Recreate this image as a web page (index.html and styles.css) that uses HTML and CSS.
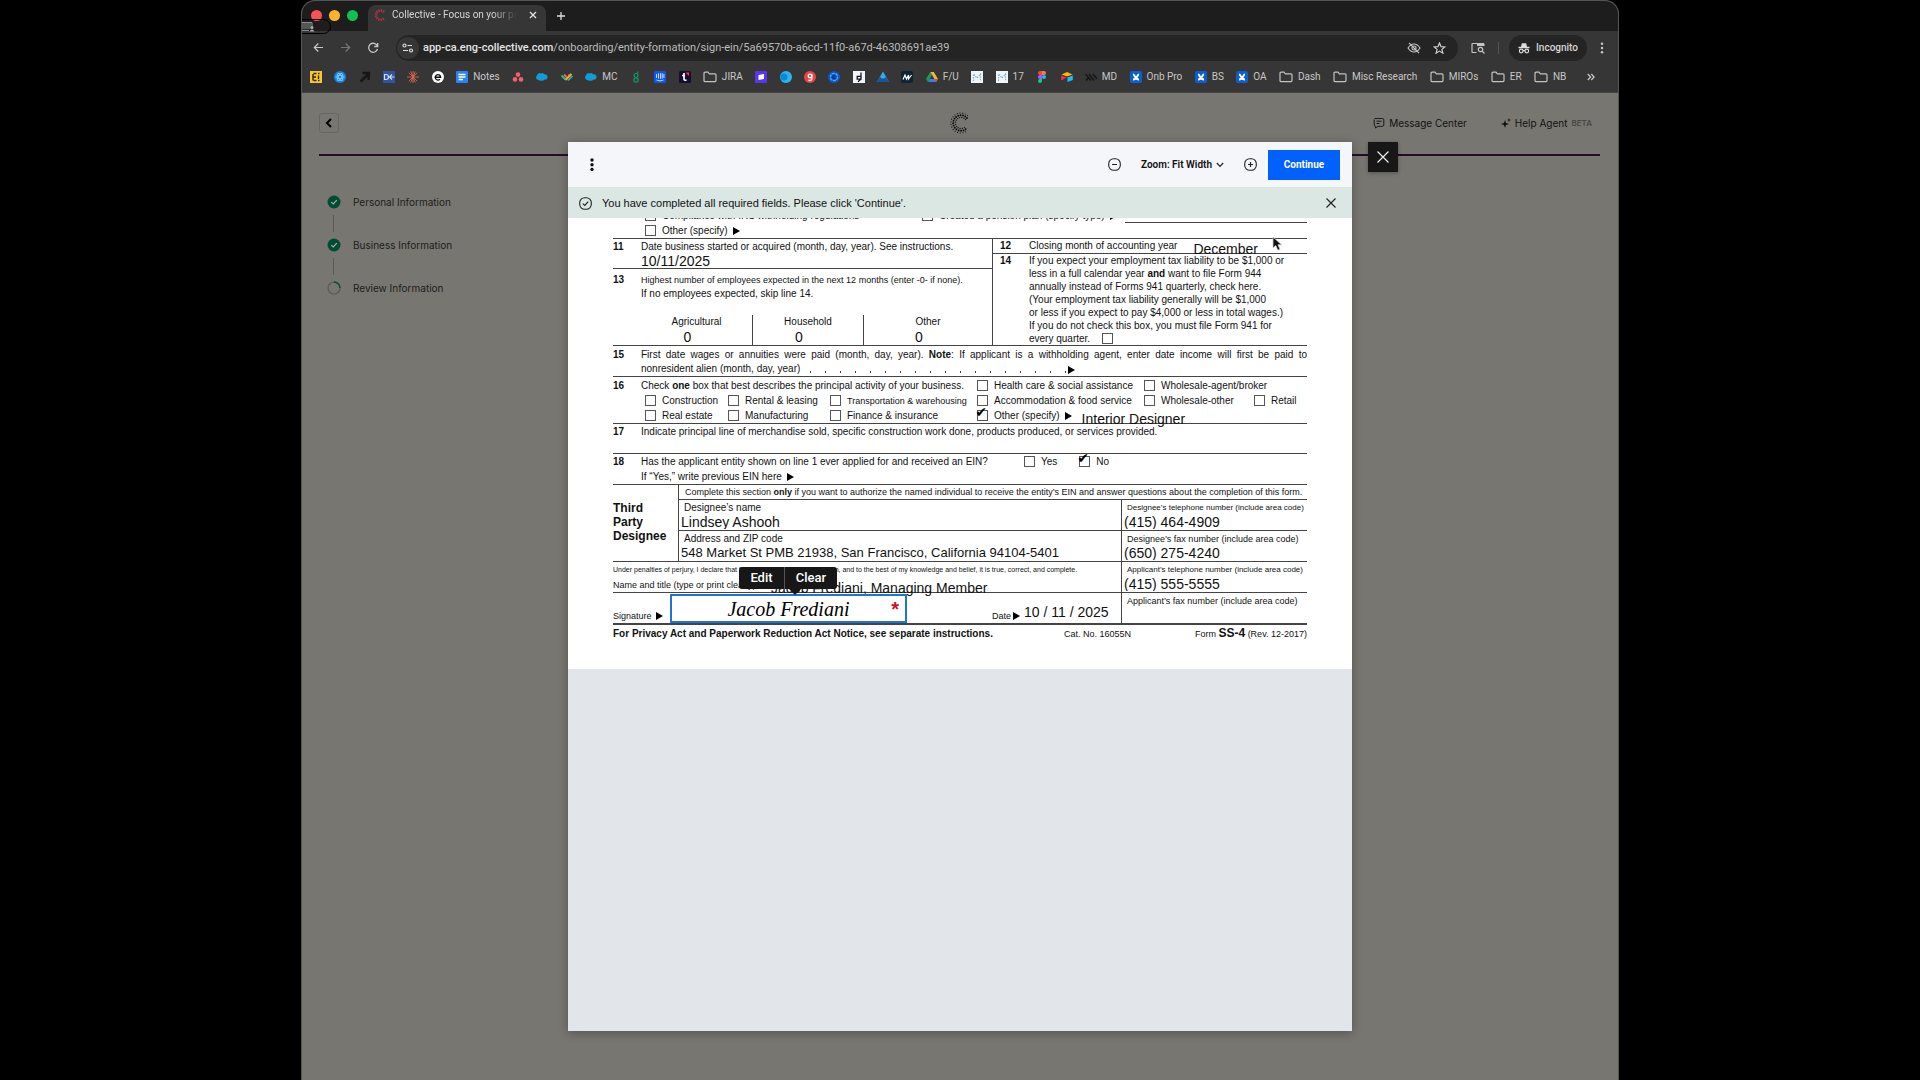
FILE: index.html
```html
<!DOCTYPE html>
<html lang="en">
<head>
<meta charset="utf-8">
<title>Collective - Focus on your passion</title>
<link rel="stylesheet" href="styles.css">
</head>
<body>
<svg class="defs" aria-hidden="true">
  <symbol id="folder" viewBox="0 0 14 12"><path d="M1 2.2Q1 1.2 2 1.2H5L6.4 2.8H12Q13 2.8 13 3.8V9.6Q13 10.6 12 10.6H2Q1 10.6 1 9.6Z" fill="none" stroke="#c4c4c4" stroke-width="1.2"/></symbol>
  <symbol id="cloud" viewBox="0 0 12 12"><path d="M2.5 9A2.6 2.6 0 0 1 1 4.4 2.4 2.4 0 0 1 4.8 2.6 2.3 2.3 0 0 1 8 3.3 2.8 2.8 0 0 1 11.6 6 2.8 2.8 0 0 1 8.3 8.6 2.3 2.3 0 0 1 5.2 9.4 2.4 2.4 0 0 1 2.5 9Z" fill="#109cd8"/></symbol>
  <symbol id="conf" viewBox="0 0 12 12"><rect width="12" height="12" rx="2" fill="#0b5fd0"/><path d="M3 3.600C5 3.600 5 8.400 9 8.400M9 3.600C7 3.600 7 8.400 3 8.400" stroke="#fff" stroke-width="2" fill="none"/></symbol>
  <symbol id="mm" viewBox="0 0 12 12"><rect width="12" height="12" fill="#f1f6fa"/><path d="M2.500 10V3L6 7 9.500 3V10" stroke="#7fb2d2" stroke-width="1.200" stroke-dasharray="1.500 1" fill="none"/></symbol>
  <symbol id="done" viewBox="0 0 14 14"><circle cx="7" cy="7" r="6.500" fill="#004d34"/><path d="M4.300 7.200 6.300 9 9.800 5.200" fill="none" stroke="#a8aaa4" stroke-width="1.200"/></symbol>
</svg>

<div class="browser">
  <header class="tabstrip">
    <span class="lights"><i class="light red"></i><i class="light amber"></i><i class="light green"></i></span>
    <div class="tab">
      <svg width="12" height="12" viewBox="0 0 12 12"><path d="M10 3A4.600 4.600 0 1 0 10 9.200" fill="none" stroke="#b3314c" stroke-width="2.600" stroke-dasharray="1.400 .8"/></svg>
      <span class="tab-title">Collective - Focus on your pa</span>
      <button class="bare" aria-label="Close tab"><svg width="8" height="8" viewBox="0 0 8 8"><path d="M1 1 7 7M7 1 1 7" stroke="#e4e4e4" stroke-width="1.300"/></svg></button>
    </div>
    <button class="bare" aria-label="New tab"><svg width="10" height="10" viewBox="0 0 10 10"><path d="M5 1V9M1 5H9" stroke="#ddd" stroke-width="1.300"/></svg></button>
    <span class="share"><svg width="13" height="10" viewBox="0 0 13 10"><path d="M0 .6H10V5M0 8.400H7" fill="none" stroke="#999" stroke-width="1"/><rect y="1" width="9" height="6" fill="#555"/><circle cx="10" cy="5.500" r="1.500" fill="#aaa"/><path d="M7.500 9.500Q10 5.500 12.500 9.500Z" fill="#aaa"/></svg></span>
  </header>

  <nav class="toolbar">
    <span class="nav-buttons">
      <button class="bare" aria-label="Back"><svg width="11" height="11" viewBox="0 0 11 11"><path d="M10 5.500H1.500M5.300 1.500 1.300 5.500 5.300 9.500" fill="none" stroke="#c8c8c8" stroke-width="1.200"/></svg></button>
      <button class="bare" aria-label="Forward"><svg width="11" height="11" viewBox="0 0 11 11"><path d="M1 5.500H9.500M5.700 1.500 9.700 5.500 5.700 9.500" fill="none" stroke="#777" stroke-width="1.200"/></svg></button>
      <button class="bare" aria-label="Reload"><svg width="12" height="12" viewBox="0 0 12 12"><path d="M10.300 4A4.500 4.500 0 1 0 10.500 7M10.700 1V4.500H7.200" fill="none" stroke="#c8c8c8" stroke-width="1.300"/></svg></button>
    </span>
    <div class="omnibox">
      <span class="site"><svg width="12" height="10" viewBox="0 0 12 10"><g fill="none" stroke="#ddd" stroke-width="1.200"><circle cx="2.500" cy="2.500" r="1.500"/><path d="M5.500 2.500H10M1 7.500H6"/><circle cx="9" cy="7.500" r="1.500"/></g></svg></span>
      <span class="url"><b>app-ca.eng-collective.com</b>/onboarding/entity-formation/sign-ein/5a69570b-a6cd-11f0-a67d-46308691ae39</span>
      <svg width="14" height="12" viewBox="0 0 14 12"><g fill="none" stroke="#c4c4c4" stroke-width="1.200"><path d="M1 6Q3.500 2 7 2T13 6Q10.500 10 7 10T1 6Z"/><circle cx="7" cy="6" r="2"/><path d="M2 .8 12 11.200"/></g></svg>
      <svg width="13" height="12" viewBox="0 0 13 12"><path d="M6.500 1 8 4.600 11.900 4.900 8.900 7.400 9.900 11.200 6.500 9.100 3.100 11.200 4.100 7.400 1.100 4.900 5 4.600Z" fill="none" stroke="#ccc" stroke-width="1.200"/></svg>
    </div>
    <svg width="14" height="12" viewBox="0 0 14 12"><path d="M5.500 10.500H2Q1 10.500 1 9.500V2.500Q1 1.500 2 1.500H12Q13 1.500 13 2.500V4" fill="none" stroke="#c4c4c4" stroke-width="1.200"/><rect x="6" y="1" width="7" height="3" fill="#c4c4c4"/><circle cx="9.500" cy="7.500" r="2.200" fill="none" stroke="#c4c4c4" stroke-width="1.200"/><path d="M11 9 13.500 11.500" stroke="#c4c4c4" stroke-width="1.200"/></svg>
    <span class="sep"></span>
    <span class="incognito"><svg width="12" height="12" viewBox="0 0 12 12"><path d="M3 5 3.800 1.200H8.200L9 5Z" fill="#ddd"/><path d="M.5 5.500H11.500" stroke="#ddd" stroke-width="1.300"/><g fill="none" stroke="#ddd" stroke-width="1.200"><circle cx="3.200" cy="9" r="1.800"/><circle cx="8.800" cy="9" r="1.800"/><path d="M5 8.600H7"/></g></svg>Incognito</span>
    <button class="bare" aria-label="Menu"><svg width="4" height="12" viewBox="0 0 4 12"><g fill="#ccc"><circle cx="2" cy="1.800" r="1.200"/><circle cx="2" cy="6" r="1.200"/><circle cx="2" cy="10.200" r="1.200"/></g></svg></button>
  </nav>

  <nav class="bookmarks">
    <a href="#" aria-label="Board"><svg viewBox="0 0 12 12"><rect width="12" height="12" fill="#fcc62c"/><path d="M3.500 2.500H6.500M8 2.500H9.500M3.500 9.500H6.500M8 9.500H9.500M3 3V9.500M3.500 6H6M8.500 4.500V8" stroke="#2b230a" stroke-width="1.400"/></svg></a>
    <a href="#" aria-label="Atom"><svg viewBox="0 0 12 12"><circle cx="6" cy="6" r="6" fill="#1283ea"/><g fill="none" stroke="#8fd0ff" stroke-width=".8"><ellipse cx="6" cy="6" rx="4.200" ry="1.800"/><ellipse cx="6" cy="6" rx="4.200" ry="1.800" transform="rotate(60 6 6)"/><ellipse cx="6" cy="6" rx="4.200" ry="1.800" transform="rotate(120 6 6)"/></g></svg></a>
    <a href="#" aria-label="Arrow"><svg viewBox="0 0 12 12"><path d="M1.500 10.500 9 3.500M3.500 2H10L9.500 9" fill="none" stroke="#161616" stroke-width="2.400"/></svg></a>
    <a href="#" aria-label="Key"><svg viewBox="0 0 12 12"><rect width="12" height="12" fill="#2f559f"/><path d="M1.500 3.500V8.500H3Q5.500 8.500 5.500 6T3 3.500ZM6 6H11.500M9 3.500 6.500 6 9 8.500" fill="none" stroke="#cfdcf2" stroke-width="1.200"/></svg></a>
    <a href="#" aria-label="Claude"><svg viewBox="0 0 12 12"><path d="M6 0V12M0 6H12M1.800 1.800 10.200 10.200M10.200 1.800 1.800 10.200M3.700 .5 8.300 11.500M8.300 .5 3.700 11.500" stroke="#d9684d" stroke-width=".9"/></svg></a>
    <a href="#" aria-label="Everee"><svg viewBox="0 0 12 12"><circle cx="6" cy="6" r="6" fill="#fff"/><path d="M3.400 6.200H8.600A2.700 2.700 0 1 0 7.800 8.300" fill="none" stroke="#111" stroke-width="1.400"/></svg></a>
    <a href="#"><svg viewBox="0 0 12 12"><rect width="12" height="12" rx="1" fill="#2c82f0"/><path d="M2.500 3.500H9.500M2.500 6H9.500M2.500 8.500H7" stroke="#fff" stroke-width="1.300"/></svg>Notes</a>
    <a href="#" aria-label="Asana"><svg viewBox="0 0 12 12"><g fill="#f3606e"><circle cx="6" cy="3.600" r="2.300"/><circle cx="3" cy="8.400" r="2.300"/><circle cx="9" cy="8.400" r="2.300"/></g></svg></a>
    <a href="#" aria-label="Salesforce"><svg><use href="#cloud"/></svg></a>
    <a href="#" aria-label="Weave"><svg viewBox="0 0 12 12"><path d="M.5 4.500 4.500 8.500" stroke="#2bb59a" stroke-width="2"/><path d="M3 3.500 7 7.500M7.500 3.500 9.500 5.500" stroke="#f0643c" stroke-width="2"/><path d="M4.500 9 10.500 3" stroke="#eda53c" stroke-width="2"/><path d="M7 9.500 11.500 5" stroke="#2bb59a" stroke-width="1.600"/></svg></a>
    <a href="#"><svg><use href="#cloud"/></svg>MC</a>
    <a href="#" aria-label="Gusto"><svg viewBox="0 0 12 12"><g fill="none" stroke="#15966e" stroke-width="1.200"><circle cx="6" cy="4.500" r="2"/><circle cx="6" cy="9" r="2.200"/><path d="M7.500 3 8 .5"/></g></svg></a>
    <a href="#" aria-label="Intercom"><svg viewBox="0 0 12 12"><rect width="12" height="12" rx="1.500" fill="#0d57ea"/><path d="M2.500 3V7M4.500 2.300V7.600M6.500 2.200V7.800M8.200 2.300V7.600M9.900 3V7M2.500 9Q6 11 9.500 9" fill="none" stroke="#dfe9ff" stroke-width=".9"/></svg></a>
    <a href="#" aria-label="Tettra"><svg viewBox="0 0 12 12"><rect width="12" height="12" rx="1.500" fill="#170d2c"/><path d="M5 2V8Q5 9.500 7.500 9.200M3 4.500H6" fill="none" stroke="#fff" stroke-width="1.700"/><path d="M6.500 1.500H10V5Z" fill="#f04434"/></svg></a>
    <a href="#" class="dir"><svg><use href="#folder"/></svg>JIRA</a>
    <a href="#" aria-label="Loop"><svg viewBox="0 0 12 12"><rect width="12" height="12" rx="1" fill="#5636ef"/><path d="M3.500 4 9 3V8L3.500 9Z" fill="#fff"/></svg></a>
    <a href="#" aria-label="Circle"><svg viewBox="0 0 12 12"><circle cx="6" cy="6" r="6" fill="#28b6ef"/><circle cx="4" cy="6" r="3.500" fill="#078ad9"/></svg></a>
    <a href="#" aria-label="G2"><svg viewBox="0 0 12 12"><circle cx="6" cy="6" r="6" fill="#ec4444"/><circle cx="6" cy="5" r="1.800" fill="none" stroke="#fff" stroke-width="1.300"/><path d="M7.800 3V7.500Q7.800 9.500 6 9.500 5 9.500 4.300 9" fill="none" stroke="#fff" stroke-width="1.300"/></svg></a>
    <a href="#" aria-label="Calendly"><svg viewBox="0 0 12 12"><circle cx="6" cy="6" r="6" fill="#0a58c9"/><circle cx="6" cy="6" r="3.600" fill="none" stroke="#4aa5ff" stroke-width="1.300" stroke-dasharray="3 .6"/><path d="M7.300 4.800Q5 4 4.800 6T7.300 7.200" fill="none" stroke="#032c6b" stroke-width="1.200"/></svg></a>
    <a href="#" aria-label="Drive d"><svg viewBox="0 0 12 12"><rect width="12" height="12" fill="#f3f3fa"/><path d="M8 1.500V7M4.200 5.300H8V8.200H4.200ZM8 8 5 10.800" fill="none" stroke="#16161f" stroke-width="1.300"/></svg></a>
    <a href="#" aria-label="Peak"><svg viewBox="0 0 12 12"><path d="M6 .5 12 11H0Z" fill="#3ba6ee"/><path d="M3 6Q6 9 9 6L12 11H0Z" fill="#15569f"/></svg></a>
    <a href="#" aria-label="Monarch"><svg viewBox="0 0 12 12"><rect width="12" height="12" rx="2" fill="#0d2336"/><path d="M2 8.500 4 4 5.500 8 7.500 4V8L10.500 4" fill="none" stroke="#fff" stroke-width="1.200"/></svg></a>
    <a href="#"><svg viewBox="0 0 12 12"><path d="M4.200 1H7.800L12 8H8.500Z" fill="#f4b82a"/><path d="M4.200 1 0 8 1.900 11 6 4Z" fill="#1c9b55"/><path d="M3.700 8H12L10.200 11H1.900Z" fill="#3a7ef0"/><path d="M8.500 8H12L10.200 11Z" fill="#e6483b"/></svg>F/U</a>
    <a href="#" aria-label="M"><svg><use href="#mm"/></svg></a>
    <a href="#"><svg><use href="#mm"/></svg>17</a>
    <a href="#" aria-label="Figma"><svg viewBox="0 0 12 12"><path d="M6 0H4A2 2 0 0 0 4 4H6Z" fill="#f24e1e"/><path d="M6 0H8A2 2 0 0 1 8 4H6Z" fill="#ff7262"/><path d="M6 4H4A2 2 0 0 0 4 8H6Z" fill="#a259ff"/><circle cx="8" cy="6" r="2" fill="#1abcfe"/><path d="M6 8H4A2 2 0 1 0 6 10Z" fill="#0acf83"/></svg></a>
    <a href="#" aria-label="Airtable"><svg viewBox="0 0 12 12"><path d="M.5 3.500 6 1 11.500 3.500 6 5.500Z" fill="#fcb400"/><path d="M6.500 6.500 11.800 4.500V9L6.500 11Z" fill="#18bfff"/><path d="M.2 4.800 5.500 6.500.2 9.500Z" fill="#f82b60"/></svg></a>
    <a href="#"><svg viewBox="0 0 12 12"><path d="M.5 3 6 9.500M4 3 9 9.500M8 3 12 8M1 9.500 3 7" stroke="#161616" stroke-width="1.500"/></svg>MD</a>
    <a href="#"><svg><use href="#conf"/></svg>Onb Pro</a>
    <a href="#"><svg><use href="#conf"/></svg>BS</a>
    <a href="#"><svg><use href="#conf"/></svg>OA</a>
    <a href="#" class="dir"><svg><use href="#folder"/></svg>Dash</a>
    <a href="#" class="dir"><svg><use href="#folder"/></svg>Misc Research</a>
    <a href="#" class="dir"><svg><use href="#folder"/></svg>MIROs</a>
    <a href="#" class="dir"><svg><use href="#folder"/></svg>ER</a>
    <a href="#" class="dir"><svg><use href="#folder"/></svg>NB</a>
    <button class="bare more" aria-label="More bookmarks"><svg width="8" height="8" viewBox="0 0 8 8"><path d="M.8 1 3.600 4 .8 7M4.300 1 7.100 4 4.300 7" fill="none" stroke="#ccc" stroke-width="1.200"/></svg></button>
  </nav>

  <div class="view">
    <div class="app">
      <header class="app-head">
        <button class="back" aria-label="Back"><svg width="8" height="10" viewBox="0 0 8 10"><path d="M6 1 2 5 6 9" fill="none" stroke="#000" stroke-width="2"/></svg></button>
        <svg class="logo" width="20" height="24" viewBox="0 0 20 24"><g fill="none" stroke="#0c0c0c" stroke-linecap="round"><path d="M17.500 4.500A10 10 0 1 0 17.500 19.500" stroke-width="1.200" stroke-dasharray="0 2.700"/><path d="M17 7A7.800 7.800 0 1 0 17 17" stroke-width="1.900" stroke-dasharray="0 2.400"/><path d="M15.500 8.500A5.600 5.600 0 1 0 15.500 15.500" stroke-width="1.300" stroke-dasharray="0 2.100"/></g></svg>
        <span class="head-links">
          <a href="#"><svg width="12" height="12" viewBox="0 0 12 12"><path d="M1.500 1.500H9.500Q10.800 1.500 10.800 2.800V8Q10.800 9.300 9.500 9.300H5L2.500 11V9.300Q1.200 9 1.200 8V2.500M3.500 4.200H8.500M3.500 6.500H6.500" fill="none" stroke="#1a1a1a" stroke-width="1"/></svg>Message Center</a>
          <a href="#"><svg width="10" height="10" viewBox="0 0 10 10"><path d="M4 2 5 5 8 6 5 7 4 10 3 7 0 6 3 5ZM8 0 8.500 1.500 10 2 8.500 2.500 8 4 7.500 2.500 6 2 7.500 1.500Z" fill="#111"/></svg>Help Agent <small>BETA</small></a>
        </span>
      </header>
      <ol class="steps">
        <li><svg width="14" height="14"><use href="#done"/></svg>Personal Information</li>
        <li><svg width="14" height="14"><use href="#done"/></svg>Business Information</li>
        <li><svg width="14" height="14" viewBox="0 0 14 14"><circle cx="7" cy="7" r="6" fill="none" stroke="#5b5a56" stroke-width="1.200"/><path d="M7 1A6 6 0 0 1 13 7" fill="none" stroke="#005238" stroke-width="1.600"/></svg>Review Information</li>
      </ol>
    </div>

    <div class="overlay">
      <section class="modal" role="dialog" aria-label="Sign document">
        <button class="dismiss" aria-label="Close"><svg width="12" height="12" viewBox="0 0 12 12"><path d="M.5.5 11.500 11.500M11.500.5.5 11.500" stroke="#eee" stroke-width="1.200"/></svg></button>
        <header class="modal-head">
          <button class="bare" aria-label="Options"><svg width="4" height="14" viewBox="0 0 4 14"><g fill="#111"><circle cx="2" cy="2" r="1.700"/><circle cx="2" cy="6.700" r="1.700"/><circle cx="2" cy="11.400" r="1.700"/></g></svg></button>
          <span class="zoom">
            <button class="bare" aria-label="Zoom out"><svg width="13" height="13" viewBox="0 0 13 13"><rect x=".7" y=".7" width="11.600" height="11.600" rx="5" fill="none" stroke="#222" stroke-width="1.100"/><path d="M4 6.500H9" stroke="#222" stroke-width="1.200"/></svg></button>
            <button class="bare zoom-pick">Zoom: Fit Width <svg width="8" height="6" viewBox="0 0 8 6"><path d="M.8 1 4 4.400 7.200 1" fill="none" stroke="#222" stroke-width="1.200"/></svg></button>
            <button class="bare" aria-label="Zoom in"><svg width="13" height="13" viewBox="0 0 13 13"><rect x=".7" y=".7" width="11.600" height="11.600" rx="5" fill="none" stroke="#222" stroke-width="1.100"/><path d="M4 6.500H9M6.500 4V9" stroke="#222" stroke-width="1.200"/></svg></button>
          </span>
          <button class="continue">Continue</button>
        </header>
        <div class="notice" role="status">
          <svg width="13" height="13" viewBox="0 0 13 13"><rect x=".7" y=".7" width="11.600" height="11.600" rx="5" fill="none" stroke="#222" stroke-width="1.100"/><path d="M3.800 6.600 5.800 8.400 9.200 4.700" fill="none" stroke="#222" stroke-width="1.200"/></svg>
          <span>You have completed all required fields. Please click 'Continue'.</span>
          <button class="bare" aria-label="Dismiss notice"><svg width="10" height="10" viewBox="0 0 10 10"><path d="M.5.5 9.500 9.500M9.500.5.5 9.500" stroke="#222" stroke-width="1.200"/></svg></button>
        </div>
        <div class="scroller">
          <form class="sheet">
            <div class="tail">
              <label class="check"><input type="checkbox">Compliance with IRS withholding regulations</label>
              <label class="check">
                <input type="checkbox">Created a pension plan (specify type) <i class="arrow"></i></label>
              <span class="blank"></span>
              <label class="check"><input type="checkbox">Other (specify)<i class="arrow"></i></label>
            </div>

            <div class="split">
              <div class="half-left">
                <div class="line line11"><b>11</b><label for="start">Date business started or acquired (month, day, year). See instructions.</label>
                  <input id="start" class="field second" value="10/11/2025"></div>
                <div class="line line13"><b>13</b><span><span class="narrow">Highest number of employees expected in the next 12 months (enter -0- if none).</span><br>If no employees expected, skip line 14.</span></div>
                <div class="counts">
                  <label>Agricultural<input class="field" value="0"></label>
                  <label>Household<input class="field" value="0"></label>
                  <label>Other<input class="field" value="0"></label>
                </div>
              </div>
              <div class="half-right">
                <div class="line line12"><b>12</b><label for="month">Closing month of accounting year</label><input id="month" class="field low" value="December"></div>
                <div class="line line14"><b>14</b><span>If you expect your employment tax liability to be $1,000 or<br>less in a full calendar year <b>and</b> want to file Form 944<br>annually instead of Forms 941 quarterly, check here.<br>(Your employment tax liability generally will be $1,000<br>or less if you expect to pay $4,000 or less in total wages.)<br>If you do not check this box, you must file Form 941 for<br><label class="check trailing">every quarter.<input type="checkbox"></label></span></div>
              </div>
            </div>

            <div class="line line15"><b>15</b><span class="justify">First date wages or annuities were paid (month, day, year). <b>Note</b>: If applicant is a withholding agent, enter date income will first be paid to</span>
              <span class="second leader">nonresident alien (month, day, year) <span class="dots"></span><i class="arrow"></i></span></div>

            <div class="activity">
              <b>16</b><span class="wide">Check <b>one</b> box that best describes the principal activity of your business.</span>
              <label class="check"><input type="checkbox">Health care &amp; social assistance</label>
              <label class="check broker"><input type="checkbox">Wholesale-agent/broker</label>
              <label class="check first"><input type="checkbox">Construction</label>
              <label class="check"><input type="checkbox">Rental &amp; leasing</label>
              <label class="check narrow"><input type="checkbox">Transportation &amp; warehousing</label>
              <label class="check"><input type="checkbox">Accommodation &amp; food service</label>
              <label class="check"><input type="checkbox">Wholesale-other</label>
              <label class="check"><input type="checkbox">Retail</label>
              <label class="check first"><input type="checkbox">Real estate</label>
              <label class="check"><input type="checkbox">Manufacturing</label>
              <label class="check"><input type="checkbox">Finance &amp; insurance</label>
              <span class="specify"><label class="check"><input type="checkbox" checked>Other (specify)<i class="arrow"></i></label><input class="field low" aria-label="Other activity" value="Interior Designer"></span>
            </div>

            <div class="line line17"><b>17</b><span>Indicate principal line of merchandise sold, specific construction work done, products produced, or services provided.</span></div>

            <div class="line line18"><b>18</b><span class="question">Has the applicant entity shown on line 1 ever applied for and received an EIN?
              <span class="answers"><label class="check"><input type="checkbox">Yes</label><label class="check"><input type="checkbox" checked>No</label></span></span>
              <span class="second">If “Yes,” write previous EIN here <i class="arrow"></i></span></div>

            <div class="designee">
              <b class="designee-title">Third<br>Party<br>Designee</b>
              <div class="designee-body">
                <p class="authorize narrow">Complete this section <b>only</b> if you want to authorize the named individual to receive the entity’s EIN and answer questions about the completion of this form.</p>
                <div class="pair"><label>Designee’s name<input class="field" value="Lindsey Ashooh"></label><label class="side tight">Designee’s telephone number (include area code)<input class="field" value="(415) 464-4909"></label></div>
                <div class="pair"><label>Address and ZIP code<input class="field compact" value="548 Market St PMB 21938, San Francisco, California 94104-5401"></label><label class="side narrow">Designee’s fax number (include area code)<input class="field" value="(650) 275-4240"></label></div>
              </div>
            </div>

            <div class="applicant">
              <div class="pair">
                <div class="name"><span class="perjury">Under penalties of perjury, I declare that I have examined this application, and to the best of my knowledge and belief, it is true, correct, and complete.</span>
                  <span class="name-row"><label for="who">Name and title (type or print clearly) <i class="arrow"></i></label><input id="who" class="field low" value="Jacob Frediani, Managing Member"></span></div>
                <label class="side tight">Applicant’s telephone number (include area code)<input class="field" value="(415) 555-5555"></label>
              </div>
              <div class="pair">
                <div class="sign-row">
                  <span class="tag">Signature <i class="arrow"></i></span>
                  <div class="signature">
                    <span class="script">Jacob Frediani</span><span class="required">*</span>
                    <div class="popup"><button type="button">Edit</button><button type="button">Clear</button></div>
                  </div>
                  <label class="tag date" for="date">Date<i class="arrow"></i></label><input id="date" class="field" value="10 / 11 / 2025">
                </div>
                <span class="side narrow">Applicant’s fax number (include area code)</span>
              </div>
            </div>

            <footer class="foot"><b>For Privacy Act and Paperwork Reduction Act Notice, see separate instructions.</b><span class="cat">Cat. No. 16055N</span><span class="form-no">Form <strong>SS-4</strong> (Rev. 12-2017)</span></footer>
          </form>
        </div>
      </section>
    </div>
    <svg class="cursor" width="12" height="16" viewBox="0 0 12 16"><path d="M1 1V12L3.800 9.600 5.800 14.200 8 13.200 6 8.800H9.600Z" fill="#111" stroke="#ccc" stroke-width=".8"/></svg>
  </div>
</div>
</body>
</html>
```
FILE: styles.css
```css
* { box-sizing: border-box; }
body { margin: 0; background: #000; font: 10px/14px "Liberation Sans", Arial, sans-serif; color: #111; }
a { color: inherit; text-decoration: none; }
svg { display: block; flex: none; }
.defs { position: absolute; width: 0; height: 0; }
button { font: inherit; color: inherit; }
.bare { padding: 0; border: 0; background: none; display: flex; align-items: center; }

/* Browser window */
.browser { margin: 0 301px; min-height: 100vh; display: flex; flex-direction: column; background: #787671; border: 1px solid #555; border-bottom: 0; border-radius: 14px 14px 0 0; overflow: hidden; font-family: Roboto, sans-serif; color: #d6d6d6; }
.tabstrip { position: relative; height: 30px; flex: none; background: #1d1d1d; display: flex; align-items: center; gap: 10px; }
.lights { display: flex; gap: 7px; padding: 0 0 2px 9px; width: 56px; }
.light { width: 11px; height: 11px; border-radius: 50%; }
.red { background: #ff4f5a; }
.amber { background: #fdb42b; }
.green { background: #12c04f; }
.tab { align-self: flex-end; height: 26px; width: 178px; padding: 0 9px 6px 6px; background: #363636; border-radius: 8px 8px 0 0; display: flex; align-items: center; gap: 6px; }
.tab-title { flex: 1; overflow: hidden; white-space: nowrap; font: 10px/14px Roboto, sans-serif; mask-image: linear-gradient(90deg, #000 80%, transparent); margin-right: 6px; }
.share { position: absolute; left: -1px; top: 18px; width: 30px; height: 15px; border: 1px solid #000; border-radius: 0 8px 8px 0; padding: 2px 0; }
.toolbar { height: 33px; flex: none; background: #363636; display: flex; align-items: center; gap: 13px; padding: 0 14px 0 11px; }
.nav-buttons { display: flex; gap: 16px; width: 70px; }
.omnibox { flex: 1; height: 26px; border-radius: 13px; background: #242424; display: flex; align-items: center; gap: 12px; padding: 0 12px 0 1px; }
.site { width: 22px; height: 22px; border-radius: 50%; background: #363636; display: grid; place-items: center; }
.url { flex: 1; margin-left: -8px; white-space: nowrap; overflow: hidden; font: 11px/14px Roboto, sans-serif; color: #bdbdbd; }
.url b { font-weight: 500; color: #e4e4e4; }
.sep { width: 1px; height: 12px; background: #555; margin-right: -3px; }
.incognito { height: 26px; border-radius: 13px; background: #242424; padding: 0 9px; display: flex; align-items: center; gap: 6px; font: 500 10px/14px Roboto, sans-serif; }
.bookmarks { height: 29px; flex: none; background: #363636; border-bottom: 1px solid #444; display: flex; align-items: center; justify-content: space-between; padding: 0 23px 2px 8px; }
.bookmarks a { display: flex; align-items: center; gap: 5px; white-space: nowrap; color: #c8c8c8; }
.bookmarks a svg { width: 12px; height: 12px; }
.bookmarks .dir svg { width: 14px; }
.more { margin-left: 8px; }

/* Onboarding page */
.view { position: relative; flex: 1; display: flex; color: #111; font-family: Inter, sans-serif; }
.app { flex: 1; padding: 10px 18px 0 17px; }
.app-head { height: 53px; border-bottom: 2px solid #260a2b; display: grid; grid-template-columns: 1fr auto 1fr; align-items: center; padding-bottom: 11px; }
.back { width: 20px; height: 20px; border: 1px solid #686661; border-radius: 3px; background: none; padding: 0; display: grid; place-items: center; }
.head-links { justify-self: end; display: flex; gap: 34px; padding-right: 8px; }
.head-links a { display: flex; align-items: center; gap: 4px; }
.head-links small { font-size: 8px; font-weight: 600; color: #484744; }
.steps { list-style: none; margin: 39px 0 0 8px; padding: 0; display: grid; gap: 29px; }
.steps li { display: flex; align-items: center; gap: 12px; height: 14px; position: relative; color: #1c1c1c; }
.steps li + li::before { content: ""; position: absolute; left: 6px; bottom: 20px; width: 1px; height: 17px; background: #5a5955; }

/* Signing dialog */
.overlay { position: absolute; inset: 0; padding: 49px 266px; display: flex; }
.modal { position: relative; flex: 1; min-width: 0; display: flex; flex-direction: column; background: #e2e5ea; box-shadow: 0 2px 10px rgb(0 0 0 / .3); }
.dismiss { position: absolute; left: calc(100% + 16px); top: 0; width: 30px; height: 30px; border: 0; padding: 0; background: #171717; display: grid; place-items: center; box-shadow: 0 1px 4px rgb(0 0 0 / .3); }
.modal-head { height: 45px; background: #f5f6f9; display: flex; align-items: center; justify-content: space-between; padding: 0 12px 0 22px; font-family: Roboto, sans-serif; }
.zoom { display: flex; align-items: center; gap: 20px; margin: 0 11px 0 auto; }
.zoom-pick { font-size: 10px; font-weight: 600; gap: 4px; }
.continue { width: 72px; height: 30px; border: 0; padding: 0; background: #0061fe; color: #fff; font-size: 10px; font-weight: 700; }
.notice { height: 31px; background: #dbe7e3; display: flex; align-items: center; gap: 10px; padding: 1px 16px 0 11px; font: 11px/14px "Liberation Sans", Arial, sans-serif; }
.notice span { flex: 1; }
.scroller { flex: 1; overflow: hidden; }

/* SS-4 sheet */
.sheet { margin-top: -10px; background: #fff; padding: 0 45px; height: 461px; font: 10px/14px "Liberation Sans", Arial, sans-serif; white-space: nowrap; }
.narrow { font-size: 9px; }
.tight { font-size: 8px; }
.field { font: 14px/14px "Liberation Sans", Arial, sans-serif; color: #111; border: 0; padding: 0; height: 14px; background: none; width: 100%; min-width: 0; display: block; outline: 0; }
.compact { font-size: 13px; }
.low { align-self: end; height: 16px; margin-bottom: -4px; flex: 1; }
.arrow { display: inline-block; border: solid transparent; border-width: 4px 0 4px 7px; border-left-color: #000; margin: 0 0 -1px 2px; }
.check { display: flex; align-items: center; gap: 6px; }
.check .arrow { margin: 0 0 0 -1px; }
.check input { appearance: none; flex: none; width: 11px; height: 11px; margin: 0; border: 1px solid #555; display: grid; place-items: center; }
.check input:checked::before { content: "✔"; font: 14px/14px "DejaVu Sans", sans-serif; margin: -8px 0 0 -3px; color: #000; }
.trailing { gap: 12px; height: 13px; }
.line { display: grid; grid-template-columns: 28px 1fr; }
.line, .activity, .split { border-bottom: 1px solid #444; }
.second { grid-column: 2; }

.tail { display: grid; grid-template-columns: 277px 203px 1fr; grid-auto-rows: 15px; padding-left: 32px; border-bottom: 1px solid #444; }
.blank { border-bottom: 1px solid #444; }
.tail .check { justify-self: start; }

.split { display: grid; grid-template-columns: 380px 1fr; }
.half-left { border-right: 1px solid #444; height: 106px; }
.line11 { padding-top: 1px; height: 30px; }
.line13 { padding-top: 4px; border: 0; height: 46px; }
.counts { margin-left: 28px; display: grid; grid-template-columns: 111px 111px 1fr; height: 30px; text-align: center; }
.counts label + label { border-left: 1px solid #444; }
.counts .field { text-align: center; padding-right: 18px; height: 16px; }
.line12, .line14 { grid-template-columns: 29px auto 1fr; padding-left: 7px; }
.line12 { height: 15px; }
.line12 .low { margin-left: 16px; width: 90px; }
.line14 { border: 0; line-height: 13px; }

.line15 { padding-top: 2px; height: 31px; }
.justify { white-space: normal; text-align-last: justify; height: 14px; }
.leader { display: flex; align-items: center; }
.dots { width: 256px; height: 2px; margin: 6px 0 0 10px; background: repeating-linear-gradient(90deg, #444 0 1px, transparent 1px 15px); }

.activity { display: grid; grid-template-columns: 28px 87px 102px 147px 167px 110px 1fr; grid-auto-rows: 15px; align-items: center; padding-top: 1px; }
.wide { grid-column: 2 / 5; }
.broker { grid-column: 6 / 8; }
.first { grid-column: 2; margin-left: 4px; }
.specify { grid-column: 5 / 8; display: flex; gap: 10px; height: 15px; }

.line17 { padding-top: 1px; height: 30px; }
.line18 { line-height: 15px; height: 31px; }
.question { display: flex; }
.answers { display: flex; gap: 22px; margin-left: 36px; }

.designee { display: grid; grid-template-columns: 65px 1fr; border-bottom: 1px solid #444; }
.designee-title { align-self: center; font-size: 12px; padding-bottom: 2px; }
.designee-body { border-left: 1px solid #444; }
.authorize { margin: 0; padding-left: 6px; height: 15px; border-bottom: 1px solid #444; }
.pair { display: grid; grid-template-columns: 1fr 186px; height: 31px; border-bottom: 1px solid #444; }
.pair label { display: block; padding: 1px 0 0 5px; }
.pair .field { margin-left: -3px; }
.pair .side { border-left: 1px solid #444; padding: 1px 0 0 5px; }
.designee .pair:last-child, .applicant .pair:last-child { border-bottom: 0; height: 30px; }
.applicant { border-bottom: 2px solid #444; }
.name { display: grid; grid-template-rows: 15px 15px; }
.perjury { font-size: 7px; padding-top: 1px; }
.name-row { display: flex; gap: 7px; font-size: 9px; }
.pair .name-row label, .pair .tag { padding-left: 0; }
.sign-row { display: flex; align-items: end; font-size: 9px; }
.tag { width: 57px; }
.signature { position: relative; width: 237px; height: 29px; border: 2px solid #1f73d8; background: #fff; display: flex; align-items: center; justify-content: center; }
.script { font: italic 20px/24px "Liberation Serif", serif; color: #000; }
.required { position: absolute; right: 6px; top: 3px; font: bold 20px/20px "Liberation Sans", sans-serif; color: #c8102e; }
.popup { position: absolute; left: 67px; bottom: calc(100% + 7px); display: flex; border-radius: 3px; background: #171717; color: #fff; }
.popup button { border: 0; background: none; padding: 0; width: 45px; height: 22px; font: 500 13px/22px Roboto, sans-serif; }
.popup button + button { width: 53px; border-left: 1px solid #555; }
.popup::after { content: ""; position: absolute; left: 50px; top: 100%; border: solid transparent; border-width: 6px 6px 0; border-top-color: #171717; }
.pair .date { margin-left: auto; width: 32px; }
.sign-row .field { width: 97px; height: 22px; margin: 0; }
.foot { display: grid; grid-template-columns: 451px 1fr auto; padding-top: 1px; align-items: baseline; font-size: 9px; }
.foot b { font-size: 10px; }
.foot strong { font-size: 12px; }

.cursor { position: absolute; left: 970px; top: 143px; }
```
